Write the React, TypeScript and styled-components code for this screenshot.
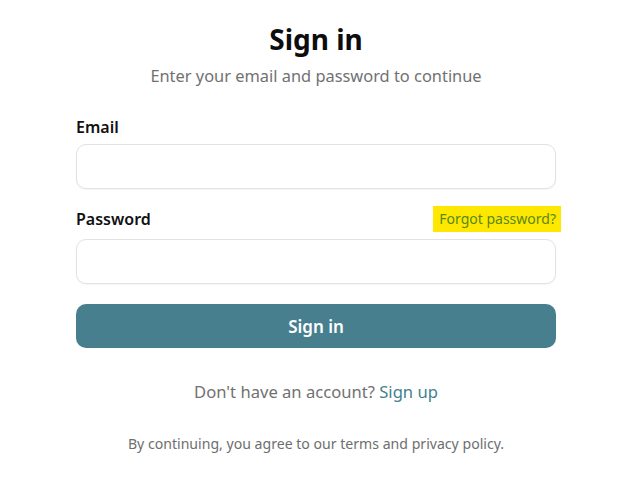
import React from "react";
import styled, { createGlobalStyle } from "styled-components";

const Global = createGlobalStyle`
  html, body { margin: 0; padding: 0; background: #ffffff; }
  body { font-family: "Segoe UI", "Noto Sans", "Open Sans", sans-serif; color: #111111; }
  * { box-sizing: border-box; }
`;

const Page = styled.div`
  display: flex;
  justify-content: center;
  padding: 22px 5px 0 0;
`;

const Card = styled.div`
  width: 480px;
  display: flex;
  flex-direction: column;
`;

const Title = styled.h1`
  margin: 0;
  text-align: center;
  font-size: 28px;
  line-height: 34px;
  font-weight: 700;
  color: #0d0d0d;
`;

const Subtitle = styled.p`
  margin: 8px 0 0;
  text-align: center;
  font-size: 16.4px;
  line-height: 24px;
  color: #717171;
`;

const Form = styled.form`
  display: flex;
  flex-direction: column;
  margin-top: 26px;
`;

const Field = styled.div<{ $gapTop?: number }>`
  display: flex;
  flex-direction: column;
  margin-top: ${(p) => p.$gapTop ?? 0}px;
`;

const LabelRow = styled.div<{ $gap: number }>`
  display: flex;
  justify-content: space-between;
  align-items: center;
  height: 26px;
  margin-bottom: ${(p) => p.$gap}px;
`;

const Label = styled.label`
  font-size: 16px;
  line-height: 24px;
  font-weight: 600;
  color: #111111;
`;

const ForgotLink = styled.a`
  background: #ffe800;
  color: #57891a;
  font-size: 14px;
  line-height: 26px;
  padding: 0 5px 0 6px;
  margin-right: -5px;
  text-decoration: none;
`;

const Input = styled.input`
  height: 45px;
  width: 100%;
  border: 1px solid #e2e2e2;
  border-radius: 10px;
  background: #ffffff;
  box-shadow: 0 1px 2px rgba(0, 0, 0, 0.05);
  font-family: inherit;
  font-size: 16px;
  padding: 0 14px;
  outline: none;
`;

const SubmitButton = styled.button`
  margin-top: 20px;
  height: 44px;
  width: 100%;
  border: none;
  border-radius: 10px;
  background: #477f8f;
  color: #ffffff;
  font-family: inherit;
  font-size: 17px;
  font-weight: 600;
  cursor: pointer;
`;

const SignUpLine = styled.p`
  margin: 32px 0 0;
  text-align: center;
  font-size: 16.6px;
  line-height: 24px;
  color: #717171;
`;

const SignUpLink = styled.a`
  color: #3f7f90;
  text-decoration: none;
`;

const Terms = styled.p`
  margin: 30px 0 0;
  text-align: center;
  font-size: 14.1px;
  line-height: 20px;
  color: #6e6e6e;
`;

export default function App() {
  return (
    <>
      <Global />
      <Page>
        <Card>
          <Title>Sign in</Title>
          <Subtitle>Enter your email and password to continue</Subtitle>
          <Form onSubmit={(e) => e.preventDefault()}>
            <Field>
              <LabelRow $gap={4}>
                <Label htmlFor="email">Email</Label>
              </LabelRow>
              <Input id="email" type="email" />
            </Field>
            <Field $gapTop={17}>
              <LabelRow $gap={7}>
                <Label htmlFor="password">Password</Label>
                <ForgotLink href="#">Forgot password?</ForgotLink>
              </LabelRow>
              <Input id="password" type="password" />
            </Field>
            <SubmitButton type="submit">Sign in</SubmitButton>
          </Form>
          <SignUpLine>
            Don't have an account? <SignUpLink href="#">Sign up</SignUpLink>
          </SignUpLine>
          <Terms>By continuing, you agree to our terms and privacy policy.</Terms>
        </Card>
      </Page>
    </>
  );
}
